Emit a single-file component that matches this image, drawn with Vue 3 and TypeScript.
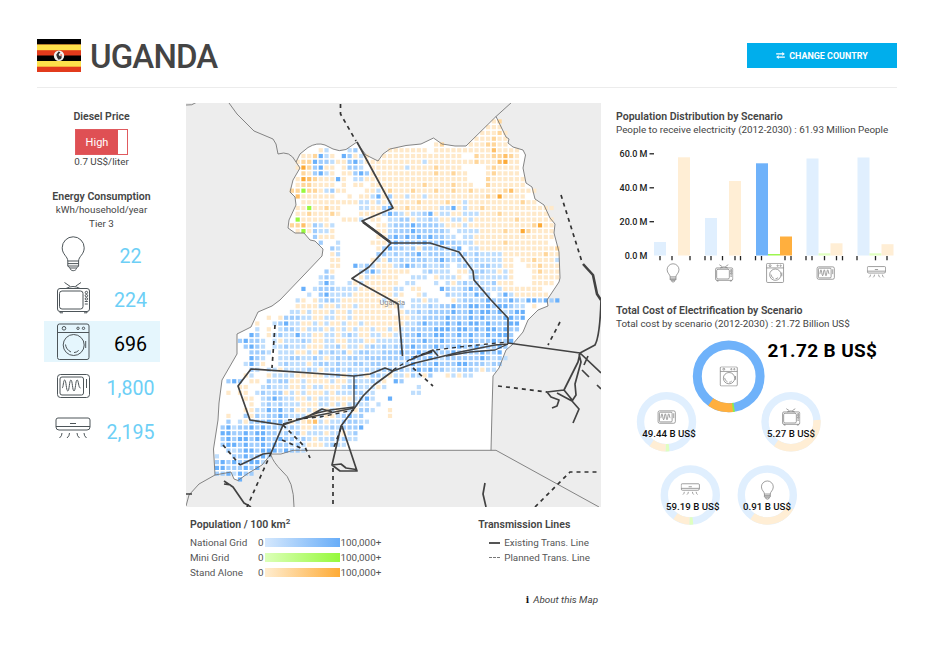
<script setup lang="ts">
interface Appliance { id: string; use: string }
interface Cell { x: number; y: number; kind: string }
interface Bar { x: number; top: number; kind: string; active: boolean }
interface Segment { color: string; start: number; length: number }
interface Donut { icon: string; x: number; y: number; r: number; width: number; label: string; labelX: number; base: string; segments: Segment[] }

const appliances: Appliance[] = [
  { id: 'bulb', use: '22' },
  { id: 'tv', use: '224' },
  { id: 'washer', use: '696' },
  { id: 'microwave', use: '1,800' },
  { id: 'aircon', use: '2,195' },
]
const selected = 'washer'

// Each row lists runs as "column:kinds", where a kind may carry a repeat count.
// b c d = national grid (light to dark), n o p q = stand alone, g = mini grid.
const rows: string[] = [
  '48:no',
  '47:nnn',
  '46:nnnon',
  '45:nnnonn',
  '38:no 44:nnnoonn',
  '18:nb 23:bc 30:n7 38:n10pn4',
  '15:nnodbn.dcnbn 29:n14 44:.onnoopon',
  '14:noodccbnncdbnnn 29:n7bn8onnnpqnn',
  '14:nqocdnn.nccb.nnnnnnbnnnnonnnn 47:nonnnn',
  '15:oncdbn.nncdcn7nnnnonnonn 47:nonnnn',
  '14:nqponnndn.bbn18 47:onnnnnn',
  '14:noonnnn 22:n.nn.n9onnnnonnn 47:onnnnnn',
  '13:oogoonbcnn 26:nnbnonnnonnnonnonnonnnnnopnnnn',
  '14:pnnnnnn 23:n.nnbdncnnbnnbnn9onqnnnn',
  '15:nnnnnnnnnnbbnbnbnnnnonnnnonnbn9onn',
  '14:nngnnonn 25:bbnncdnnonnnnnbbdnbnnonnnnnnnnnnnn',
  '14:nnonnnon 25:nnnnbdcbnbbcdnbbnnbbbnnnonnnnnnnn',
  '14:gnnnnn 22:nnnb.nn.bbccnbbcbnnbbnbnnnnnnnonnnnnn',
  '13:oopncbnb 28:nnbcccdccccbnnnbnnnnnnnnnnnoqnn',
  '14:ngncbbn 28:nnbcccdcccccb.bbbbnnnnonnqonnnn',
  '17:cnnn 28:nncdcdcdcdccbb.bbnnnnnnnnnnnnnn',
  '18:c..b 27:nnncdccccdccdccbbbnnnnnonnnnnnn',
  '20:cb 28:ncdccbcnccccccd 43:.bbnnnnnnnnnnnnno',
  '20:nb 28:ccbcbccdbcccbccc 44:bcbbbbnnnnnnnonn',
  '20:nn 27:nbncbcbcccbcdcbcb 44:bcbbbbnn.nnonnnb',
  '20:nn 24:dbcbnnnbcdcbcbbcb.bcbbccbb 50:nn..nnonnn',
  '19:cn 25:bcdbnnnnn..bcbbb.n 43:nbccbbnbn 55:nonnn',
  '18:bcb 24:.nbnnnnn..bbb.nbbbn.bcbbbbbn 55:nnnnn',
  '18:bdb..bnbnnnnnn.bb...b.bnbcbcbbcnnn 55:nnnn',
  '15:d.bcccbbbbnnnnnnbb.nn...dcbbcdccbbbnnnnnnn',
  '16:b.cdbbbbnnnnnnnbn..nb...cbbcbdcc.bdbnnnnnn',
  '14:bn.nbccbnnnnnnnbnn..bb 36:nbb..nbccbcdcccdcbddcdcd',
  '14:nnnnbnnbnnbnnnnnnn 32:b.bbbcbccdccddcdcddcbb.n',
  '13:bbnbnnnbnnbnnnnnnn 32:nbbcbccccdccdcddcdbcdd',
  '9:n.ncccbbnnbbnnbnnnnnnnn 32:nnbbccccdcccdcdcccddcd',
  '7:n..bcdbbnnbnbnnbnnbnnnnnn 32:nbbcdcccdcdcddcdcccdd',
  '7:b.n.bccbnbbbnbnbnbnnbnnbn 32:bbccccdddcddcdcddcdcc',
  '6:dc.nbcbbdbbnnbbnbcbnnbbnnb 32:bccdccddccdcdccdcddc',
  '4:cdccb.bnbbbcbnnbbnnbbbnnbbbb 32:cbccdccdccccdcccdccd',
  '4:.cdcb.bbcbbbnnnbbcnbbnbcbcbc 32:ccdcccdcccdccdcccdc',
  '6:cccb.bbbnnbncbcbcnbccbbcccd 33:ccdcdcccdccccdccd',
  '6:dcb..bbccbbcbnbcbccbccccccc 33:cdccdcbccccccdcbcb',
  '5:bdbn..bcbbbnbccbcbbccbccbcb 32:ccdcccdcccddcccbcc',
  '6:cb.bbnbbbbcbnbccbcbbcbccccc 33:bcdcdccbbcccbnbb',
  '5:nb..nbbbbnnnnnbbcnbcbnccbnbbncbnc..nbnbb',
  '2:cdc.nn.cbccnnbnnnnbnnbcbbcbn.dc',
  '4:nn..bcbbbnnbnbbnnnbcdbbbnb 35:b',
  '2:n.nn.bcbccnbnbnnnbnbbbccbb 34:bb',
  '5:nn.bcdcbbnnbnbbnnnnbcdb 30:d',
  '6:n.bcbcbbbnnnbbnbnbcbb 28:b',
  '5:nnbbdcdbcnnbnbnbnnbnccb 30:n',
  '2:n..cncbccdcbbbnnbnnbcdbc 30:n',
  '2:c.bncccdcdbnbnopbnbbcccbb',
  '1:cdbccdcdcccbcbnnbbbcbcccd',
  '1:ddccdcddccbcbcnbbbnbbnbc',
  '1:cdcddcddccdccbcbnbbcbcbb',
  '1:cddcdccdcdccbcbnnnbcbb',
  '2:cbcddcdddcdccb',
  '0:b..ccdccdb',
  '0:cdcdccddb',
  '0:ddcccdcd',
  '0:ccdbdcc',
  '4:d',
]

const cells: Cell[] = rows.flatMap((row, r) => {
  const out: Cell[] = []
  for (const run of row.split(' ')) {
    const [start, kinds] = run.split(':')
    let col = Number(start)
    for (const [, kind, count] of kinds.matchAll(/([a-z.])(\d*)/g)) {
      for (let i = 0; i < Number(count || 1); i++, col++) {
        if (kind !== '.') out.push({ x: 214.8 + col * 5.77, y: 119.3 + r * 5.775, kind })
      }
    }
  }
  return out
})

const axis = [
  { label: '60.0 M', y: 153.8 },
  { label: '40.0 M', y: 187.8 },
  { label: '20.0 M', y: 221.7 },
  { label: '0.0 M', y: 255.5 },
]
const bars: Bar[] = [
  { x: 654, top: 242, kind: 'grid', active: false },
  { x: 678, top: 157.3, kind: 'alone', active: false },
  { x: 705, top: 218, kind: 'grid', active: false },
  { x: 729, top: 181, kind: 'alone', active: false },
  { x: 756, top: 163.3, kind: 'grid', active: true },
  { x: 768, top: 254, kind: 'mini', active: true },
  { x: 780, top: 236.5, kind: 'alone', active: true },
  { x: 806.5, top: 158.5, kind: 'grid', active: false },
  { x: 818.5, top: 253.3, kind: 'mini', active: false },
  { x: 830.5, top: 243.3, kind: 'alone', active: false },
  { x: 857.5, top: 157.5, kind: 'grid', active: false },
  { x: 869.5, top: 253.3, kind: 'mini', active: false },
  { x: 881.5, top: 244.2, kind: 'alone', active: false },
]
const ticks = [660, 672, 690, 705, 711, 722.5, 735, 740.5, 755.5, 761.5, 785, 791, 806, 812, 824.5, 836.5, 842.5, 857, 875.5, 887]
const chartIcons = [
  { id: 'bulb', x: 673 }, { id: 'tv', x: 724 }, { id: 'washer', x: 775 },
  { id: 'microwave', x: 825.5 }, { id: 'aircon', x: 876.5 },
]

const paleBlue = '#e0effe'
const paleOrange = '#ffeed5'
const paleGreen = '#dfffc0'
const donuts: Donut[] = [
  { icon: 'washer', x: 728.7, y: 376.3, r: 31.4, width: 9, label: '', labelX: 0, base: '#6fb2fa',
    segments: [{ color: '#8df04b', start: 170, length: 4 }, { color: '#ffaf3e', start: 173, length: 42 }] },
  { icon: 'microwave', x: 666.5, y: 421.8, r: 26, width: 7.4, label: '49.44 B US$', labelX: 669, base: paleBlue,
    segments: [{ color: paleGreen, start: 174, length: 8 }, { color: paleOrange, start: 182, length: 33 }] },
  { icon: 'tv', x: 791, y: 421.8, r: 26, width: 7.4, label: '5.27 B US$', labelX: 791, base: paleBlue,
    segments: [{ color: paleOrange, start: 86, length: 129 }] },
  { icon: 'aircon', x: 690.3, y: 495, r: 26, width: 7.4, label: '59.19 B US$', labelX: 692.800, base: paleBlue,
    segments: [{ color: paleGreen, start: 174, length: 8 }, { color: paleOrange, start: 182, length: 33 }] },
  { icon: 'bulb', x: 767.3, y: 495, r: 26, width: 7.4, label: '0.91 B US$', labelX: 767, base: paleBlue,
    segments: [{ color: paleOrange, start: 119, length: 96 }] },
]

const legend = [
  { name: 'National Grid', kind: 'grid' },
  { name: 'Mini Grid', kind: 'mini' },
  { name: 'Stand Alone', kind: 'alone' },
]
</script>

<template>
  <div class="page">
    <svg class="defs" aria-hidden="true">
      <symbol id="bulb" viewBox="0 0 36 38">
        <path d="M12.8 26c0-4.5-5.6-6.500-5.600-13.200a11 11 0 0 1 22 0c0 6.700-5.600 8.700-5.600 13.200zM12.800 26v5l2 2h6.800l2-2v-5M12.800 28.600h10.800M12.800 31h10.800M15 33.200c.5 3.300 6 3.300 6.600 0" />
      </symbol>
      <symbol id="tv" viewBox="0 0 36 38">
        <rect x="2.500" y="9.500" width="32" height="23" rx="2.500" />
        <rect x="4.500" y="12" width="23.500" height="18" rx="2.500" />
        <path d="M11 9.500q7-4 14 0M15 7.300L9.500 3.500M20.500 7.300L26 3.500M5 32.500v1.300h3M32 32.500v1.300h-3M29.800 22.500h3M29.800 25h3" />
        <circle cx="31.400" cy="13.500" r="1.200" /><circle cx="31.400" cy="16.700" r="1.200" /><circle cx="31.400" cy="19.900" r="1.200" />
      </symbol>
      <symbol id="washer" viewBox="0 0 36 38">
        <rect x="2.500" y="1" width="31.500" height="35.500" rx="2" />
        <path d="M2.500 9.500H34M30.700 18v7M10.500 21.500q.5 5 5.500 7.500M19 29.600q3-.3 4.700-2.200" />
        <circle cx="9" cy="5.300" r="1.800" /><circle cx="23" cy="5.300" r="1.200" /><circle cx="28.500" cy="5.300" r="1.200" />
        <circle cx="18.700" cy="22" r="10.500" />
      </symbol>
      <symbol id="microwave" viewBox="0 0 36 38">
        <rect x="2.500" y="7.500" width="32" height="23" rx="3" />
        <rect x="5" y="10" width="23.500" height="18" rx="2" />
        <path d="M31.500 12v9M7 21c1.500 0 1.200-8 2.700-8s1.500 11 3.100 11 1.500-11 3.100-11 1.500 11 3.100 11 1.500-11 3.100-11 1.200 8 3.400 8" />
      </symbol>
      <symbol id="aircon" viewBox="0 0 36 38">
        <path d="M3 7h30q2 0 2 2v7q0 3-3 3H4q-3 0-3-3V9q0-2 2-2zM1 15.500h34M15 12.500h6M7 22q0 3-2.500 5M14.500 22q0 3-2.500 5M22 22q0 3 2.500 5M29 22q0 3 2.500 5" />
      </symbol>
    </svg>

    <header class="header">
      <svg class="flag" viewBox="0 0 44 33">
        <rect width="44" height="33" fill="#e23b1c" />
        <rect width="44" height="5.500" fill="#000" />
        <rect y="5.500" width="44" height="5.700" fill="#fde14b" />
        <rect y="16.500" width="44" height="5.500" fill="#000" />
        <rect y="22" width="44" height="5.700" fill="#fde14b" />
        <circle cx="22" cy="16.700" r="5.200" fill="#f3f1ef" />
        <path d="M21.500 12.500l2 .8-1.800 2 .6 1.500 2.700.7-1 2.500-2.500.8-1.300-2-1-3z" fill="#333" />
        <path d="M23.800 14.500l1.500 2-2 .5z" fill="#d94b35" />
      </svg>
      <h1>UGANDA</h1>
      <button class="change">
        <svg viewBox="0 0 10 8"><path d="M0 2.200h7.500M2.500 5.800H10" /><path class="tip" d="M7 0l3 2.200-3 2.200zM3 3.600L0 5.800 3 8z" /></svg>
        CHANGE COUNTRY
      </button>
    </header>

    <main class="content">
      <aside class="side">
        <div class="facts">
          <h2>Diesel Price</h2>
          <div class="price"><span>High</span></div>
          <p>0.7 US$/liter</p>
          <h2 class="energy">Energy Consumption</h2>
          <p>kWh/household/year</p>
          <p class="tier">Tier 3</p>
        </div>
        <ul class="appliances">
          <li v-for="a in appliances" :key="a.id" :class="{ selected: a.id === selected }">
            <svg class="icon"><use :href="'#' + a.id" /></svg>
            <span>{{ a.use }}</span>
          </li>
        </ul>
      </aside>

      <section class="middle">
        <svg class="map" viewBox="186 103 415 404">
          <rect x="186" y="103" width="415" height="404" fill="#ededed" />
          <path class="country" d="M296 162L300 154 308 147.500Q317 142 325 145L333 149Q339 152 346 149.500L356.500 142.300 366 155 378 161 383 154 390 149 406 145.500 421 144 433.500 138 442 144 455 146H466L496 116.500 506 137 509 139 508 143 513 147 523 150 525.500 155 523 168 526 183 532 187 535 199 544 205 550 218 555 224 554 233 559 252 560 278 559 282 547 300 548 306 538 310 528 320 523 332 512 345 506 350 499 368 493 376 492 410 491 450.300H293L281 454H271L262 465 247 474 238 480.500 234 479 231 472 215 475 213.500 449 218 420 219 403 222 380 237 354V334L251 327 258 312 272 306 280 300 303 276 322 256 323 249 315 241 310 240 304 233H295L288 228 289 220 296 205 295 197 290 192 293 180 300 168Z" />
          <rect v-for="(c, i) in cells" :key="i" :x="c.x" :y="c.y" width="4.200" height="4.200" :class="'cell-' + c.kind" />
          <g class="border">
            <path d="M186 105Q192 106 197 102M229 103L237 114 254 131 273 139 276 144 278 154Q290 150 296 162M496 116.500L512 102M491 450.300H496L599 507M215 475L199 484 189 495 186 506M271 455Q273 462 282 471 294 480 294 507" />
            <path d="M296 162L300 154 308 147.500Q317 142 325 145L333 149Q339 152 346 149.500L356.500 142.300 366 155 378 161 383 154 390 149 406 145.500 421 144 433.500 138 442 144 455 146H466L496 116.500 506 137 509 139 508 143 513 147 523 150 525.500 155 523 168 526 183 532 187 535 199 544 205 550 218 555 224 554 233 559 252 560 278 559 282 547 300 548 306 538 310 528 320 523 332 512 345 506 350 499 368 493 376 492 410 491 450.300H293L281 454H271L262 465 247 474 238 480.500 234 479 231 472 215 475 213.500 449 218 420 219 403 222 380 237 354V334L251 327 258 312 272 306 280 300 303 276 322 256 323 249 315 241 310 240 304 233H295L288 228 289 220 296 205 295 197 290 192 293 180 300 168Z" />
          </g>
          <text class="place" x="379.500" y="304.700">Uganda</text>
          <g class="existing">
            <path d="M357 142L393 208 362 221 391 243 369 267 352 278.500 398 304 402.500 356M391 243H430L459 252 473 271 474 280 491 300 508 318V343L580 353 595 345Q600 336 601 300M508 344L495 345 460 352 440 357 415 363 393 371 374 385 363 396 356 406 341 426 332 465 340 471H357L342 426M332 465L341 464 346 468 356 469.500M393 371L385 368 370 374 354 376 251 369 238 386 250 420 283 425 317 413 330 410 354 407M283 425L271 453 263 454 240 465M283 424L305 418 322 409 332 412M410 360L433 350 438 356M416 357L432 352" />
            <path d="M224 481L233 487 244 503 251 507M224 484L231 485M186 494H192M580 353L578 362 564 390 547 392 551 397 559 400 557 406 552 408M557 393L572 401 579 409 573 423M572 401L576 395 575 384 581 362 579 354M582 370L589 377M580 353L601 373M584 365L588 356M564 390L573 401M485 483L483 494 486 507M597 385L601 389" />
            <path class="thin" d="M354 376V407M446 356L470 352 495 350 508 344M305 418L325 414 354 408" />
            <path class="thick" d="M583 264L593 275 597 294 601 300M363 222L390 242" />
          </g>
          <g class="planned">
            <path d="M340.500 104V114L356 141M561 195L582 262M275 325L272 368M223 445L240 465M283 425L305 447 310 458M282 440L303 449M271 453L247 507M333 468V507M341 428L333 450M413 368L433 386M560 322L548 345M498 386L547 392M535 507L570 472H600" />
            <path class="thin" d="M393 370L414 357 435 350 468 346 508 342M288 420L320 417 354 410" />
          </g>
        </svg>

        <div class="legends">
          <div class="population">
            <h2>Population / 100 km<sup>2</sup></h2>
            <div v-for="l in legend" :key="l.kind" class="scale">
              <span class="name">{{ l.name }}</span><span>0</span><i :class="l.kind"></i><span>100,000+</span>
            </div>
          </div>
          <div class="lines">
            <h2>Transmission Lines</h2>
            <div class="line"><i class="solid"></i>Existing Trans. Line</div>
            <div class="line"><i class="dashed"></i>Planned Trans. Line</div>
          </div>
        </div>
        <p class="about"><b>i</b>About this Map</p>
      </section>

      <section class="charts">
        <h2>Population Distribution by Scenario</h2>
        <p>People to receive electricity (2012-2030) : 61.93 Million People</p>
        <svg class="bars" viewBox="616 137 285 150">
          <g v-for="a in axis" :key="a.label">
            <text class="axis" x="647.500" :y="a.y + 3.200">{{ a.label }}</text>
            <path v-if="a.label !== '0.0 M'" class="tick" :d="`M649.500 ${a.y}h4.500`" />
          </g>
          <rect v-for="b in bars" :key="b.x" :x="b.x" :y="b.top" width="12" :height="255.500 - b.top" :class="['bar', b.kind, { active: b.active }]" />
          <path v-for="t in ticks" :key="t" class="tick" :d="`M${t} 256v4.300`" />
          <svg v-for="c in chartIcons" :key="c.id" class="small-icon" :x="c.x - 9.800" y="262.800" width="19.500" height="20.500"><use :href="'#' + c.id" /></svg>
        </svg>

        <h2>Total Cost of Electrification by Scenario</h2>
        <p>Total cost by scenario (2012-2030) : 21.72 Billion US$</p>
        <svg class="donuts" viewBox="616 331 285 200">
          <g v-for="d in donuts" :key="d.icon">
            <circle :cx="d.x" :cy="d.y" :r="d.r" fill="none" :stroke="d.base" :stroke-width="d.width" />
            <circle v-for="s in d.segments" :key="s.start" :cx="d.x" :cy="d.y" :r="d.r" fill="none" :stroke="s.color" :stroke-width="d.width"
              pathLength="360" :stroke-dasharray="`${s.length} 360`" :stroke-dashoffset="-s.start" :transform="`rotate(-90 ${d.x} ${d.y})`" />
            <svg class="small-icon" :x="d.x - 9.800" :y="d.label ? d.y - 15 : d.y - 10" width="19.500" height="20.500"><use :href="'#' + d.icon" /></svg>
            <text v-if="d.label" class="cost" :x="d.labelX" :y="d.y + 14.700">{{ d.label }}</text>
          </g>
          <text class="total" x="767.500" y="356.500" textLength="109.500">21.72 B US$</text>
        </svg>
      </section>
    </main>
  </div>
</template>

<style>
body { background: #fff; }
</style>

<style scoped>
.page { box-sizing: border-box; width: 941px; height: 659px; padding: 27px 44px 0 37px; overflow: hidden; font: 9.850px/13px Roboto, sans-serif; color: #444; }
.defs { position: absolute; width: 0; height: 0; }
h1, h2, p, ul { margin: 0; padding: 0; }
h2 { font-size: 10.550px; line-height: 13px; font-weight: 600; white-space: nowrap; }
p { white-space: nowrap; }
.header { display: flex; align-items: center; height: 61px; border-bottom: 1px solid #ececec; box-sizing: border-box; padding-bottom: 3px; }
.flag { width: 44px; height: 33px; }
h1 { margin-left: 9px; padding-top: 2px; font-size: 33px; line-height: 40px; font-weight: 500; letter-spacing: -0.850px; }
.change { display: flex; align-items: center; justify-content: center; gap: 4px; width: 150px; height: 25px; margin-left: auto; padding: 0; border: 0; background: #00aeec; color: #fff; font: 700 8.950px Roboto, sans-serif; }
.change svg { width: 9px; height: 7px; }
.change path { stroke: #fff; stroke-width: 1.300; }
.change .tip { fill: #fff; stroke: none; }
.content { display: grid; grid-template-columns: 116px 415px 285px; column-gap: 26px; padding-left: 7px; padding-top: 15px; }
.side { text-align: center; padding-top: 7px; }
.facts { padding-right: 1px; }
.price { box-sizing: border-box; width: 53px; height: 26px; margin: 6px auto 0; border: 1px solid #e05a5e; }
.price span { display: block; width: 42px; line-height: 25px; background: #df5054; color: #fff; font-size: 11px; height: 24px; }
.energy { margin-top: 22px; }
.tier { margin-top: 1px; }
.appliances { list-style: none; padding-top: 3px; }
.appliances li { display: flex; align-items: center; height: 41px; margin-bottom: 3px; }
.appliances .icon { flex: none; width: 36px; height: 38px; margin-left: 11px; fill: none; stroke: #4d5559; stroke-width: 1; }
.appliances span { flex: 1; padding: 6px 0 0 10px; color: #6dcff6; font-size: 19.600px; font-weight: 400; }
.appliances .selected { background: #e5f6fd; }
.appliances .selected span { color: #000; }
.map { display: block; width: 415px; height: 404px; }
.country { fill: #fff; }
.border { fill: none; stroke: #777; stroke-width: .9; }
.existing { fill: none; stroke: #424242; stroke-width: 1.700; stroke-linejoin: round; }
.existing .thin { stroke-width: 1.300; }
.existing .thick { stroke-width: 2.600; }
.planned { fill: none; stroke: #333; stroke-width: 1.700; stroke-dasharray: 4 4; }
.planned .thin { stroke-width: 1.300; }
.place { font: 7.500px Roboto, sans-serif; fill: #8b8b8b; }
.cell-b { fill: #bfdefd; }
.cell-c { fill: #a0cdfd; }
.cell-d { fill: #69b0fb; }
.cell-n { fill: #ffe9c9; }
.cell-o { fill: #ffd69a; }
.cell-p { fill: #ffc068; }
.cell-q { fill: #fca935; }
.cell-g { fill: #98f83e; }
.legends { display: flex; justify-content: space-between; padding: 11px 11px 0 4px; }
.legends h2 { margin-bottom: 4px; }
sup { font-size: 8px; line-height: 0; vertical-align: 4px; }
.scale { display: flex; align-items: center; height: 15px; color: #555; }
.scale .name { width: 68px; }
.scale i { width: 75px; height: 9px; margin: 0 1px; }
.scale .grid { background: linear-gradient(90deg, #d5e8fd, #68adf8); }
.scale .mini { background: linear-gradient(90deg, #dcffb8, #96f93c); }
.scale .alone { background: linear-gradient(90deg, #ffedd0, #feab36); }
.line { display: flex; align-items: center; height: 15px; color: #555; padding-left: 11px; }
.line i { width: 11px; margin-right: 4px; border-top: 2px solid #555; }
.line .dashed { border-top: 1px dashed #777; }
.about { margin-top: 13px; padding-right: 3px; text-align: right; font-style: italic; }
.about b { margin-right: 4px; font: 700 9px "DejaVu Serif", serif; color: #111; }
.charts { padding-top: 7px; margin-left: -11px; width: 285px; }
.bars { display: block; width: 285px; height: 150px; margin: 1px 0 17px; }
.donuts { display: block; width: 285px; height: 200px; margin-top: 1px; }
.axis { font: 500 9px Roboto, sans-serif; fill: #222; text-anchor: end; }
.tick { stroke: #222; stroke-width: 1.300; }
.bar.grid { fill: #e0effe; }
.bar.alone { fill: #ffeed5; }
.bar.mini { fill: #dfffc0; }
.bar.grid.active { fill: #6fb2fa; }
.bar.alone.active { fill: #ffaf3e; }
.bar.mini.active { fill: #9df550; }
.small-icon { fill: none; stroke: #777; stroke-width: 1.300; }
.cost { font: 500 9.700px Roboto, sans-serif; fill: #111; text-anchor: middle; }
.total { font: 700 19px Roboto, sans-serif; fill: #000; }
</style>
